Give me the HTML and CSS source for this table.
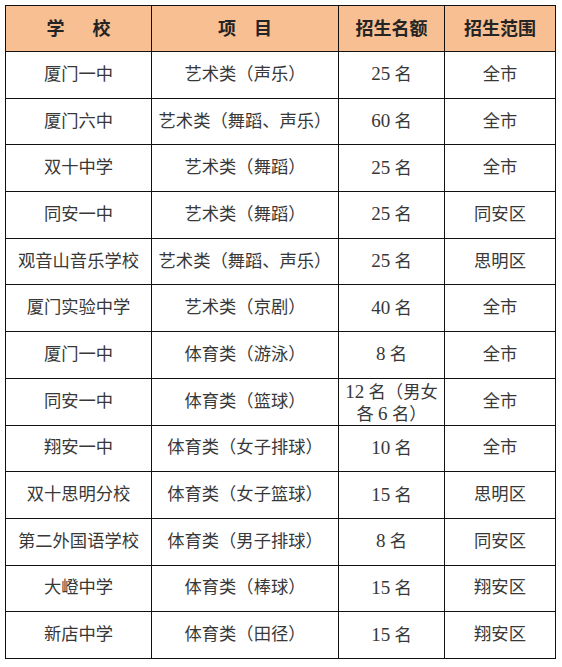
FILE: index.html
```html
<!DOCTYPE html>
<html lang="zh">
<head>
<meta charset="utf-8">
<link rel="stylesheet" href="styles.css">
</head>
<body>
<div class="table">
  <div class="cell head head-school">学　校</div>
  <div class="cell head">项　目</div>
  <div class="cell head">招生名额</div>
  <div class="cell head">招生范围</div>

  <div class="cell">厦门一中</div><div class="cell">艺术类（声乐）</div><div class="cell"><span><span class="num">25</span> 名</span></div><div class="cell">全市</div>
  <div class="cell">厦门六中</div><div class="cell">艺术类（舞蹈、声乐）</div><div class="cell"><span><span class="num">60</span> 名</span></div><div class="cell">全市</div>
  <div class="cell">双十中学</div><div class="cell">艺术类（舞蹈）</div><div class="cell"><span><span class="num">25</span> 名</span></div><div class="cell">全市</div>
  <div class="cell">同安一中</div><div class="cell">艺术类（舞蹈）</div><div class="cell"><span><span class="num">25</span> 名</span></div><div class="cell">同安区</div>
  <div class="cell">观音山音乐学校</div><div class="cell">艺术类（舞蹈、声乐）</div><div class="cell"><span><span class="num">25</span> 名</span></div><div class="cell">思明区</div>
  <div class="cell">厦门实验中学</div><div class="cell">艺术类（京剧）</div><div class="cell"><span><span class="num">40</span> 名</span></div><div class="cell">全市</div>
  <div class="cell">厦门一中</div><div class="cell">体育类（游泳）</div><div class="cell"><span><span class="num">8</span> 名</span></div><div class="cell">全市</div>
  <div class="cell">同安一中</div><div class="cell">体育类（篮球）</div><div class="cell two-line"><span class="num">12</span> 名（男女<br>各 <span class="num">6</span> 名）</div><div class="cell">全市</div>
  <div class="cell">翔安一中</div><div class="cell">体育类（女子排球）</div><div class="cell"><span><span class="num">10</span> 名</span></div><div class="cell">全市</div>
  <div class="cell">双十思明分校</div><div class="cell">体育类（女子篮球）</div><div class="cell"><span><span class="num">15</span> 名</span></div><div class="cell">思明区</div>
  <div class="cell">第二外国语学校</div><div class="cell">体育类（男子排球）</div><div class="cell"><span><span class="num">8</span> 名</span></div><div class="cell">同安区</div>
  <div class="cell">大嶝中学</div><div class="cell">体育类（棒球）</div><div class="cell"><span><span class="num">15</span> 名</span></div><div class="cell">翔安区</div>
  <div class="cell">新店中学</div><div class="cell">体育类（田径）</div><div class="cell"><span><span class="num">15</span> 名</span></div><div class="cell">翔安区</div>
</div>
</body>
</html>
```
FILE: styles.css
```css
html, body {
  margin: 0;
  padding: 0;
  background: #ffffff;
}

body {
  padding: 5px 0 0 5px;
  font-family: "Liberation Serif", "Noto Sans CJK SC", serif;
}

.table {
  display: grid;
  width: max-content;
  grid-template-columns: 145px 186px 105px 110px;
  grid-template-rows: 45px repeat(13, 45.7px);
  gap: 1px;
  padding: 1px;
  background: #111111;
}

.cell {
  display: flex;
  align-items: center;
  justify-content: center;
  text-align: center;
  background: #ffffff;
  color: #383838;
  font-size: 17.3px;
  line-height: 22px;
  white-space: nowrap;
}

.num {
  font-size: 19px;
}

.head {
  background: #f7bf92;
  color: #242424;
  font-size: 18px;
  font-weight: 700;
}

.head-school {
  letter-spacing: 5px;
  padding-left: 5px;
}

.two-line {
  display: block;
  align-self: center;
  white-space: normal;
  line-height: 21px;
  padding-top: 2px;
}
```
